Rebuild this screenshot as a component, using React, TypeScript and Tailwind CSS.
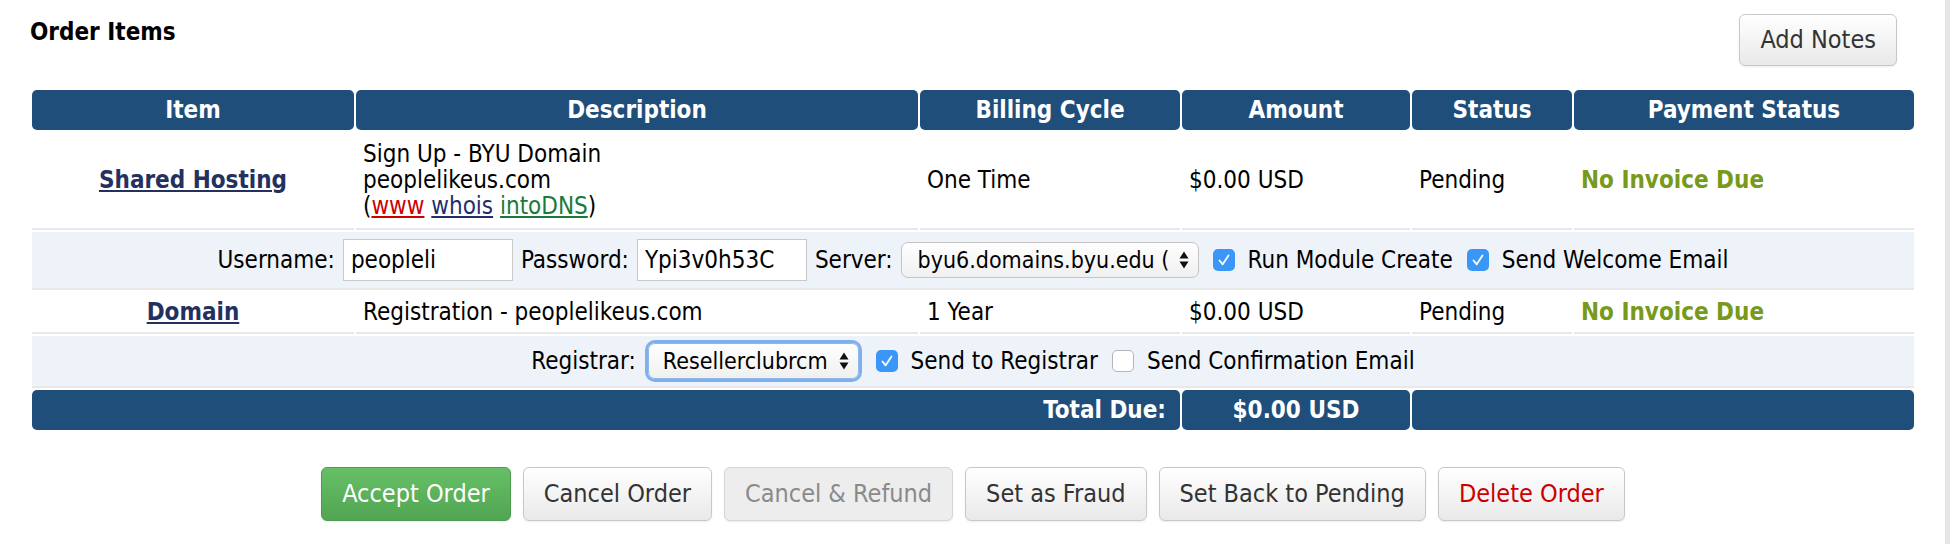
import clsx from 'clsx'

const cols = [322, 562, 260, 228, 160, 340]

function Check({ checked }: { checked: boolean }) {
  if (!checked) {
    return <span className="inline-block h-[22px] w-[22px] shrink-0 rounded-[5px] border border-[#b5b5b5] bg-white" />
  }
  return (
    <span className="inline-flex h-[22px] w-[22px] shrink-0 items-center justify-center rounded-[5px] bg-[#3b97f7]">
      <svg viewBox="0 0 22 22" width="22" height="22">
        <path d="M6.5 11.5l3.2 3.8L15.5 6.5" fill="none" stroke="white" strokeWidth="1.8" strokeLinecap="round" strokeLinejoin="round" />
      </svg>
    </span>
  )
}

function Select({ value, className, focused }: { value: string; className?: string; focused?: boolean }) {
  return (
    <span
      className={clsx(
        'relative inline-flex h-[36px] items-center overflow-hidden rounded-[7px] border bg-linear-to-b from-white to-[#f0f0f0] pr-[30px] text-[23px]',
        focused ? 'border-[#8fb8ea] pl-[14px] text-[22px] ring-[3px] ring-[#7fb0ee]' : 'border-[#c4c4c4] pl-[16px]',
        className,
      )}
    >
      <span className="overflow-hidden whitespace-nowrap">{value}</span>
      <svg className="absolute top-1/2 right-[9px] -translate-y-1/2" width="10" height="20" viewBox="0 0 10 20">
        <path d="M0.5 8.5L5 1.5l4.5 7z M0.5 11.5L5 18.5l4.5-7z" fill="#111" />
      </svg>
    </span>
  )
}

function Field({ value }: { value: string }) {
  return (
    <input
      readOnly
      value={value}
      className="h-[42px] w-[170px] border border-[#c9c9c9] bg-white px-[7px] text-[24px] text-black outline-none"
    />
  )
}

function Btn({ children, variant = 'default' }: { children: string; variant?: 'default' | 'success' | 'disabled' | 'danger' }) {
  return (
    <button
      className={clsx(
        'h-[54px] rounded-[6px] border px-[20px] text-[25px] shadow-[0_1px_2px_rgba(0,0,0,0.08)]',
        variant === 'success' && 'border-[#4e9a4e] bg-linear-to-b from-[#66c066] to-[#52a552] text-white',
        variant === 'default' && 'border-[#c8c8c8] bg-linear-to-b from-white to-[#e9e9e9] text-[#333]',
        variant === 'danger' && 'border-[#c8c8c8] bg-linear-to-b from-white to-[#e9e9e9] text-[#cc0000]',
        variant === 'disabled' && 'border-[#d6d6d6] bg-[#ededed] text-[#8a8a8a]',
      )}
    >
      {children}
    </button>
  )
}

export default function App() {
  const th = 'h-[40px] rounded-[5px] bg-[#1f4e7b] text-center text-[24px] font-bold text-white'
  const td = 'border-b-2 border-[#e8e8e8] px-[7px] align-middle'

  return (
    <div className="flex min-h-[544px] bg-white font-['DejaVu_Sans_Condensed','DejaVu_Sans',sans-serif] text-[24px] text-black">
      <div className="flex-1 pt-[14px] pl-[30px]">
        <div className="flex w-[1886px] items-start justify-between">
          <h2 className="pt-[4px] text-[24px] leading-[28px] font-bold">Order Items</h2>
          <button className="mr-[19px] h-[52px] rounded-[6px] border border-[#c8c8c8] bg-linear-to-b from-white to-[#e9e9e9] px-[20px] text-[25px] text-[#333] shadow-[0_1px_2px_rgba(0,0,0,0.08)]">
            Add Notes
          </button>
        </div>

        <table className="mt-[22px] w-[1886px] table-fixed border-separate border-spacing-0.5">
          <colgroup>
            {cols.map((w, i) => (
              <col key={i} style={{ width: w }} />
            ))}
          </colgroup>
          <thead>
            <tr>
              <th className={th}>Item</th>
              <th className={th}>Description</th>
              <th className={th}>Billing Cycle</th>
              <th className={th}>Amount</th>
              <th className={th}>Status</th>
              <th className={th}>Payment Status</th>
            </tr>
          </thead>
          <tbody>
            <tr className="h-[98px]">
              <td className={clsx(td, 'text-center')}>
                <a className="font-bold text-[#24315f] underline">Shared Hosting</a>
              </td>
              <td className={clsx(td, 'leading-[26px]')}>
                Sign Up - BYU Domain
                <br />
                peoplelikeus.com
                <br />(<a className="text-[#cc0000] underline">www</a> <a className="text-[#1f2f6b] underline">whois</a>{' '}
                <a className="text-[#1a7a3a] underline">intoDNS</a>)
              </td>
              <td className={td}>One Time</td>
              <td className={td}>$0.00 USD</td>
              <td className={td}>Pending</td>
              <td className={clsx(td, 'font-bold text-[#789a1a]')}>No Invoice Due</td>
            </tr>
            <tr className="h-[58px]">
              <td colSpan={6} className="border-b-2 border-[#e8e8e8] bg-[#eef2f9]">
                <div className="flex items-center justify-center gap-[8px]">
                  <span>Username:</span>
                  <Field value="peopleli" />
                  <span>Password:</span>
                  <Field value="Ypi3v0h53C" />
                  <span>Server:</span>
                  <Select value="byu6.domains.byu.edu (" className="w-[298px]" />
                  <span className="ml-[6px] flex items-center gap-[13px]">
                    <Check checked />
                    Run Module Create
                  </span>
                  <span className="ml-[6px] flex items-center gap-[13px]">
                    <Check checked />
                    Send Welcome Email
                  </span>
                </div>
              </td>
            </tr>
            <tr className="h-[42px]">
              <td className={clsx(td, 'text-center')}>
                <a className="font-bold text-[#24315f] underline">Domain</a>
              </td>
              <td className={td}>Registration - peoplelikeus.com</td>
              <td className={td}>1 Year</td>
              <td className={td}>$0.00 USD</td>
              <td className={td}>Pending</td>
              <td className={clsx(td, 'font-bold text-[#789a1a]')}>No Invoice Due</td>
            </tr>
            <tr className="h-[52px]">
              <td colSpan={6} className="border-b-2 border-[#e8e8e8] bg-[#eef2f9]">
                <div className="flex items-center justify-center gap-[12px]">
                  <span>Registrar:</span>
                  <Select value="Resellerclubrcm" focused />
                  <span className="ml-[5px] flex items-center gap-[13px]">
                    <Check checked />
                    Send to Registrar
                  </span>
                  <span className="ml-[2px] flex items-center gap-[13px]">
                    <Check checked={false} />
                    Send Confirmation Email
                  </span>
                </div>
              </td>
            </tr>
            <tr className="h-[40px] font-bold text-white">
              <td colSpan={3} className="rounded-[5px] bg-[#1f4e7b] pr-[14px] text-right">
                Total Due:
              </td>
              <td className="rounded-[5px] bg-[#1f4e7b] text-center">$0.00 USD</td>
              <td colSpan={2} className="rounded-[5px] bg-[#1f4e7b]" />
            </tr>
          </tbody>
        </table>

        <div className="mt-[35px] flex w-[1886px] justify-center gap-[12px]">
          <Btn variant="success">Accept Order</Btn>
          <Btn>Cancel Order</Btn>
          <Btn variant="disabled">Cancel &amp; Refund</Btn>
          <Btn>Set as Fraud</Btn>
          <Btn>Set Back to Pending</Btn>
          <Btn variant="danger">Delete Order</Btn>
        </div>
      </div>
      <div className="w-[5px] bg-[#e4e7ea]" />
    </div>
  )
}
